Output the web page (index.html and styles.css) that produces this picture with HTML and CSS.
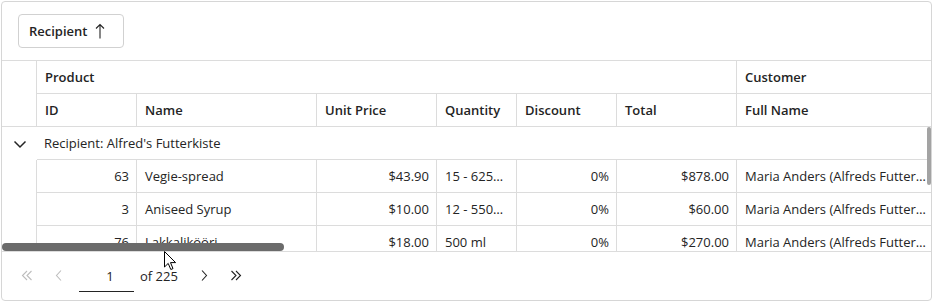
FILE: index.html
```html
<!DOCTYPE html>
<html>
<head>
<meta charset="utf-8">
<link rel="stylesheet" href="styles.css">
</head>
<body>
<div class="grid-wrap">
  <div class="toolbar">
    <button class="group-chip">Recipient
      <svg class="arrow" width="10" height="16" viewBox="0 0 10 16"><path d="M5 15.5 V1.5 M1 5.5 L5 1.5 L9 5.5" fill="none" stroke="#242424" stroke-width="1.1"/></svg>
    </button>
  </div>
  <div class="viewport">
    <div class="head">
      <div class="h-indent"></div>
      <div class="hc band product">Product</div>
      <div class="hc band customer">Customer</div>
      <div class="hc">ID</div>
      <div class="hc">Name</div>
      <div class="hc">Unit Price</div>
      <div class="hc">Quantity</div>
      <div class="hc">Discount</div>
      <div class="hc">Total</div>
      <div class="hc last">Full Name</div>
    </div>
    <div class="group-row">
      <div class="chev">
        <svg width="14" height="14" viewBox="0 0 14 14"><path d="M1.5 4.5 L7 10 L12.5 4.5" fill="none" stroke="#242424" stroke-width="1.5"/></svg>
      </div>
      <div class="group-text">Recipient: Alfred's Futterkiste</div>
    </div>
    <div class="row">
      <div class="indent"></div>
      <div class="c num">63</div>
      <div class="c">Vegie-spread</div>
      <div class="c num">$43.90</div>
      <div class="c">15 - 625g jars</div>
      <div class="c num">0%</div>
      <div class="c num">$878.00</div>
      <div class="c last">Maria Anders (Alfreds Futterkiste)</div>
    </div>
    <div class="row">
      <div class="indent"></div>
      <div class="c num">3</div>
      <div class="c">Aniseed Syrup</div>
      <div class="c num">$10.00</div>
      <div class="c">12 - 550ml bottles</div>
      <div class="c num">0%</div>
      <div class="c num">$60.00</div>
      <div class="c last">Maria Anders (Alfreds Futterkiste)</div>
    </div>
    <div class="row">
      <div class="indent"></div>
      <div class="c num">76</div>
      <div class="c">Lakkalikööri</div>
      <div class="c num">$18.00</div>
      <div class="c">500 ml</div>
      <div class="c num">0%</div>
      <div class="c num">$270.00</div>
      <div class="c last">Maria Anders (Alfreds Futterkiste)</div>
    </div>
    <div class="hthumb"></div>
    <div class="vthumb"></div>
  </div>
  <div class="pager">
    <span class="pg-btn disabled">
      <svg width="12" height="12" viewBox="0 0 12 12"><path d="M6 1 L1.5 5.5 L6 10 M10.5 1 L6 5.5 L10.5 10" fill="none" stroke="currentColor" stroke-width="1.1"/></svg>
    </span>
    <span class="pg-btn disabled">
      <svg width="12" height="12" viewBox="0 0 12 12"><path d="M8 0.5 L3.5 5.5 L8 10.5" fill="none" stroke="currentColor" stroke-width="1.1"/></svg>
    </span>
    <span class="pg-input">1</span>
    <span class="pg-of">of 225</span>
    <span class="pg-btn">
      <svg width="12" height="12" viewBox="0 0 12 12"><path d="M4 0.5 L8.5 5.5 L4 10.5" fill="none" stroke="currentColor" stroke-width="1.1"/></svg>
    </span>
    <span class="pg-btn">
      <svg width="12" height="12" viewBox="0 0 12 12"><path d="M1.5 1 L6 5.5 L1.5 10 M6 1 L10.5 5.5 L6 10" fill="none" stroke="currentColor" stroke-width="1.1"/></svg>
    </span>
  </div>
  <svg class="cursor" width="13" height="20" viewBox="0 0 13 20"><path d="M0.5 0.5 L0.5 16 L4.2 12.4 L6.8 18.5 L9 17.6 L6.5 11.6 L11.6 11.6 Z" fill="#fff" stroke="#000" stroke-width="1"/></svg>
</div>
</body>
</html>
```
FILE: styles.css
```css
* { box-sizing: border-box; }
html, body { margin: 0; padding: 0; background: #fff; }
body {
  font-family: "Open Sans", "Noto Sans", sans-serif;
  font-size: 13px;
  color: #242424;
}
.grid-wrap {
  position: relative;
  margin: 1px;
  width: 931px;
  height: 300px;
  border: 1px solid #d6d6d6;
  border-radius: 4px;
  display: flex;
  flex-direction: column;
  overflow: hidden;
}
.toolbar {
  height: 59px;
  flex: none;
  border-bottom: 1px solid #dcdcdc;
  padding: 12px 0 0 16px;
}
.group-chip {
  height: 34px;
  width: 106px;
  border: 1px solid #d1d1d1;
  border-radius: 4px;
  background: #fff;
  font-family: inherit;
  font-size: 13px;
  font-weight: 600;
  color: #242424;
  padding: 0 0 0 10px;
  text-align: left;
  display: flex;
  align-items: center;
  gap: 8px;
}
.group-chip .arrow { margin-top: -1px; }
.viewport {
  position: relative;
  height: 190px;
  flex: none;
  overflow: hidden;
}
.head, .row {
  display: grid;
  grid-template-columns: 35px 100px 180px 120px 80px 100px 120px 194px;
  width: 929px;
}
.head { grid-template-rows: 33px 33px; }
.h-indent {
  grid-row: 1 / 3;
  border-right: 1px solid #dcdcdc;
  border-bottom: 1px solid #dcdcdc;
}
.hc {
  border-right: 1px solid #dcdcdc;
  border-bottom: 1px solid #dcdcdc;
  font-weight: 600;
  padding: 0 8px;
  display: flex;
  align-items: center;
  white-space: nowrap;
}
.band.product { grid-column: 2 / 8; }
.band.customer { grid-column: 8 / 9; border-right: none; }
.hc.last { border-right: none; }
.group-row {
  display: flex;
  height: 33px;
}
.chev {
  width: 35px;
  flex: none;
  display: flex;
  align-items: center;
  justify-content: center;
  padding-left: 1px;
}
.group-text {
  flex: 1;
  border-bottom: 1px solid #dcdcdc;
  display: flex;
  align-items: center;
  padding-left: 7px;
  padding-bottom: 1px;
}
.row { height: 33px; }
.indent { border-right: 1px solid #dcdcdc; }
.c {
  border-right: 1px solid #dcdcdc;
  border-bottom: 1px solid #dcdcdc;
  padding: 0 7px 0 8px;
  display: block;
  line-height: 32px;
  white-space: nowrap;
  overflow: hidden;
  text-overflow: ellipsis;
}
.c.last { border-right: none; padding-right: 4px; }
.num { text-align: right; }
.hthumb {
  position: absolute;
  left: 0;
  bottom: 0;
  width: 282px;
  height: 8px;
  border-radius: 4px;
  background: #6b6b6b;
}
.vthumb {
  position: absolute;
  right: 0;
  top: 66px;
  width: 4px;
  height: 58px;
  border-radius: 2px;
  background: #a3a3a3;
}
.pager {
  flex: 1;
  border-top: 1px solid #dcdcdc;
  display: flex;
  align-items: center;
  padding-left: 9px;
}
.pg-btn {
  width: 32px;
  height: 32px;
  display: flex;
  align-items: center;
  justify-content: center;
  color: #242424;
}
.pg-btn.disabled { color: #bdbdbd; }
.pg-input {
  width: 55px;
  height: 32px;
  margin-left: 4px;
  border-bottom: 1px solid #242424;
  display: flex;
  align-items: center;
  justify-content: center;
  padding: 1px 0 0 7px;
}
.pg-of { margin: 0 10px 0 6px; }
.cursor {
  position: absolute;
  left: 162px;
  top: 249px;
}
```
